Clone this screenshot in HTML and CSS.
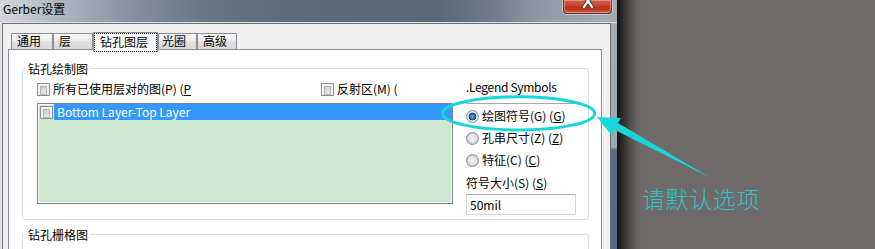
FILE: index.html
```html
<!DOCTYPE html>
<html lang="zh">
<head>
<meta charset="utf-8">
<link rel="stylesheet" href="styles.css">
</head>
<body>
<div class="screen">
  <div class="window">
    <div class="titlebar">
      <span class="title">Gerber设置</span>
      <div class="close">
        <svg class="close-x" width="14" height="14" viewBox="0 0 14 14">
          <path d="M3 1 L11 13 M11 1 L3 13" stroke="#3a3f4a" stroke-width="4.2" stroke-linecap="square" fill="none"/>
          <path d="M3 1 L11 13 M11 1 L3 13" stroke="#ffffff" stroke-width="2.2" stroke-linecap="square" fill="none"/>
        </svg>
      </div>
    </div>
    <div class="frame">
      <div class="client">
        <div class="tabs">
          <div class="tab tab-general">通用</div>
          <div class="tab tab-layer">层</div>
          <div class="tab tab-active"><span class="focus">钻孔图层</span></div>
          <div class="tab tab-aperture">光圈</div>
          <div class="tab tab-advanced">高级</div>
        </div>
        <div class="panel">
          <div class="group">
            <div class="group-title">钻孔绘制图</div>
            <div class="group-body">
              <div class="left">
                <div class="check-row">
                  <div class="check check-all"><span class="cb"></span><span>所有已使用层对的图(P) (<u>P</u></span></div>
                  <div class="check"><span class="cb"></span><span>反射区(M) (</span></div>
                </div>
                <div class="list">
                  <div class="list-row"><span class="cb"></span><span class="sel">Bottom Layer-Top Layer</span></div>
                </div>
              </div>
              <div class="right">
                <div class="legend">.Legend Symbols</div>
                <div class="sep"></div>
                <div class="radio-row radio-first"><span class="rb rb-on"></span><span>绘图符号(G) (<u>G</u>)</span></div>
                <div class="radio-row"><span class="rb"></span><span>孔串尺寸(Z) (<u>Z</u>)</span></div>
                <div class="radio-row"><span class="rb"></span><span>特征(C) (<u>C</u>)</span></div>
                <div class="size-label">符号大小(S) (<u>S</u>)</div>
                <div class="textbox">50mil</div>
              </div>
            </div>
          </div>
          <div class="group group-grid">
            <div class="group-title">钻孔栅格图</div>
            <div class="grid-body"></div>
          </div>
        </div>
      </div>
      <div class="frame-right"></div>
    </div>
  </div>
  <div class="shadow"></div>
  <div class="desktop"></div>
  <svg class="annot" width="875" height="249" viewBox="0 0 875 249">
    <ellipse cx="518.7" cy="113.4" rx="76" ry="16.6" fill="none" stroke="#17d6d8" stroke-width="3"/>
    <polygon points="597,117 621,118 618,123 710,177.5 614,129.5 612,136" fill="#17d6d8"/>
  </svg>
  <div class="note">请默认选项</div>
</div>
</body>
</html>
```
FILE: styles.css
```css
* { box-sizing: border-box; margin: 0; padding: 0; }
html, body { width: 875px; height: 249px; overflow: hidden; }
body {
  margin: 0;
  font-family: "Noto Sans CJK SC", "Noto Sans", sans-serif;
  font-size: 12px;
  color: #000;
}
u { text-decoration: underline; text-underline-offset: 1px; }

.screen {
  position: relative;
  display: flex;
  width: 875px;
  height: 249px;
  overflow: hidden;
  background: #6f6b6a;
}

.window {
  width: 617px;
  height: 249px;
  flex: none;
  display: flex;
  flex-direction: column;
  background: #e2e5e8;
}

.titlebar {
  height: 22px;
  flex: none;
  display: flex;
  align-items: flex-start;
  background: linear-gradient(to right, #d3d7db 0px, #b4bbc3 50px, #8592a0 130px, #67778a 200px, #5a6a7b 300px, #58687a 440px, #6d7b89 490px, #8f99a3 540px, #a2aab2 600px);
}
.title {
  padding-left: 3px;
  line-height: 18px;
  color: #000;
}
.close {
  margin-left: auto;
  margin-right: 5px;
  width: 49px;
  height: 14px;
  display: flex;
  justify-content: center;
  overflow: hidden;
  border: 1px solid #5a3a38;
  border-top: none;
  border-radius: 0 0 4px 4px;
  background: linear-gradient(#c9604c 0%, #d04a32 35%, #b93119 55%, #c0361c 75%, #d86a50 100%);
  box-shadow: inset 0 0 0 1px rgba(255, 200, 190, 0.45), 0 0 0 1px rgba(220, 225, 230, 0.6);
}
.close-x { margin-top: -6px; flex: none; }

.frame {
  flex: 1;
  min-height: 0;
  display: flex;
  padding: 1px 0 0 2px;
}
.client {
  width: 609px;
  flex: none;
  display: flex;
  flex-direction: column;
  padding-top: 8px;
  border: 1px solid #6c7075;
  border-bottom: none;
  background: #f0f0f0;
}
.frame-right {
  width: 6px;
  flex: none;
  background: linear-gradient(#a3abb3 0px, #a0a8b0 124px, #5c6b7e 127px, #5a697c 100%);
}

.tabs {
  position: relative;
  z-index: 1;
  flex: none;
  display: flex;
  align-items: flex-end;
  height: 18px;
  margin-left: 8px;
}
.tab {
  height: 16px;
  margin-bottom: 1px;
  padding-left: 5px;
  border: 1px solid #898c95;
  border-bottom: none;
  line-height: 14px;
  white-space: nowrap;
  background: linear-gradient(#f8f8f8, #ececec 45%, #e0e0e0 50%, #d9d9d9);
}
.tab-general { width: 42px; }
.tab-layer { width: 40px; }
.tab-aperture { width: 39px; padding-left: 3px; }
.tab-advanced { width: 40px; }
.tab-active {
  width: 65px;
  height: 20px;
  margin-bottom: -2px;
  padding: 0;
  background: #fff;
}
.focus {
  display: block;
  height: 100%;
  padding-left: 5px;
  border: 1px dotted #000;
  line-height: 15px;
}

.panel {
  flex: 1;
  min-height: 0;
  margin: -1px 8px 0 5px;
  padding: 18px 12px 0 13px;
  border: 1px solid #898c95;
  border-bottom: none;
  background: #fff;
  overflow: hidden;
}

.group {
  border: 1px solid #d5dfe5;
  border-radius: 3px;
}
.group-title {
  width: fit-content;
  margin: -8px 0 0 3px;
  padding: 0 2px;
  background: #fff;
  line-height: 16px;
}
.group-body {
  display: flex;
  padding: 4px 12px 4px 14px;
}
.left { width: 416px; flex: none; }
.right { width: 110px; flex: none; margin-left: 13px; }

.check-row {
  display: flex;
  height: 16px;
  line-height: 16px;
}
.check {
  display: flex;
  align-items: center;
  gap: 3px;
  white-space: nowrap;
}
.check-all { width: 284px; }

.cb {
  width: 13px;
  height: 13px;
  flex: none;
  padding: 2px;
  border: 1px solid #8e8f8f;
  background: #f4f4f4;
}
.cb::before {
  content: "";
  display: block;
  height: 100%;
  border: 1px solid #aeb2b8;
  background: linear-gradient(135deg, #c6cad0, #eef0f2);
}

.list {
  margin-top: 6px;
  height: 101px;
  border: 1px solid #82878f;
  background: #cde8cf;
  box-shadow: inset 0 0 0 1px #fff;
}
.list-row {
  display: flex;
  align-items: center;
  height: 16px;
  padding-left: 2px;
}
.sel {
  flex: 1;
  align-self: stretch;
  margin-left: 1px;
  padding-left: 3px;
  line-height: 16px;
  color: #fff;
  background: #3399ff;
}

.legend {
  margin-top: -2px;
  line-height: 16px;
  white-space: nowrap;
  letter-spacing: -0.3px;
}
.sep {
  margin-top: 8px;
  width: 109px;
  height: 1px;
  background: #a7a7a7;
}
.radio-row {
  display: flex;
  align-items: center;
  gap: 3px;
  height: 16px;
  margin-top: 6px;
  line-height: 16px;
  white-space: nowrap;
}
.radio-first { margin-top: 4px; }
.rb {
  width: 13px;
  height: 13px;
  flex: none;
  border: 1px solid #8d9095;
  border-radius: 50%;
  background: radial-gradient(circle at 50% 50%, #f6f6f6 0, #e6e7e9 3px, #d2d4d7 5px, #c4c6ca 6px);
}
.rb-on {
  background: radial-gradient(circle at 50% 50%, #6cc0f4 0, #2c86d2 1.5px, #1a5a9c 3px, #17447a 3.6px, #eef0f2 4.2px, #dcdee1 5.2px, #c7c9cd 6px);
}
.size-label {
  margin-top: 7px;
  line-height: 16px;
  white-space: nowrap;
}
.textbox {
  margin-top: 3px;
  width: 110px;
  height: 21px;
  padding-left: 3px;
  border: 1px solid #d2d6dc;
  border-top-color: #abadb3;
  line-height: 19px;
  background: #fff;
}

.group-grid {
  margin-top: 14px;
  border-bottom: none;
}
.grid-body { height: 40px; }

.shadow {
  width: 24px;
  flex: none;
  background: linear-gradient(to right, #141414, #2e2c2c 25%, #504d4c 55%, #666261 80%, #6f6b6a);
}
.desktop { flex: 1; }

.annot {
  position: absolute;
  left: 0;
  top: 0;
  pointer-events: none;
}
.note {
  position: absolute;
  left: 642px;
  top: 185px;
  font-size: 23px;
  line-height: 26px;
  font-weight: 300;
  letter-spacing: 0.6px;
  color: #27c6c9;
  white-space: nowrap;
}
```
